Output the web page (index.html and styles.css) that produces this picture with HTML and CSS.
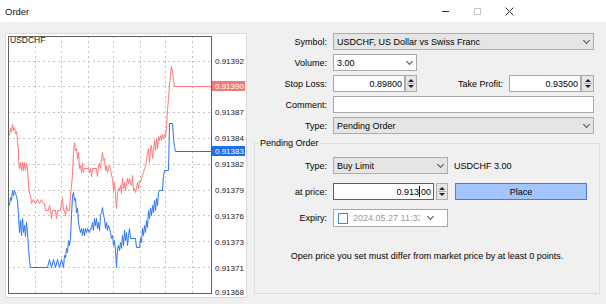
FILE: index.html
```html
<!DOCTYPE html>
<html lang="en">
<head>
  <meta charset="UTF-8">
  <title>Order</title>
  <link rel="stylesheet" href="styles.css">
</head>
<body>

  <div class="titlebar">
    <span class="title">Order</span>
    <div class="caption">
      <span class="cap-btn"><i class="min"></i></span>
      <span class="cap-btn"><i class="max"></i></span>
      <span class="cap-btn">
        <svg width="9" height="9" viewBox="0 0 9 9"><path d="M0.5 0.5 L8.5 8.5 M8.5 0.5 L0.5 8.5" stroke="#333" stroke-width="1"/></svg>
      </span>
    </div>
  </div>

  <div class="content">
    <!-- tick chart -->
    <div class="chart">
      <svg width="242" height="265" viewBox="5 33 242 265">
        <rect x="5.5" y="33.5" width="241" height="264" fill="#fff" stroke="#dadada"/>
        <g class="grid">
          <path d="M8 61.5H211 M8 86.5H211 M8 112.5H211 M8 138.5H211 M8 164.5H211 M8 190.5H211 M8 215.5H211 M8 241.5H211 M8 267.5H211"/>
          <path d="M35.5 36V294 M61.5 36V294 M88.5 36V294 M113.5 36V294 M140.5 36V294 M165.5 36V294 M192.5 36V294"/>
        </g>
        <g transform="translate(0.5 0.5)">
          <polyline class="ask" points="9,135 10,128 11,131 12,124 13,130 14,127 15,133 16,131 17,140 18,152 18,160 19,168 20,162 21,170 22,162 23,170 24,162 25,170 26,163 27,168 28,185 29,193 30,195 31,203 33,199 35,203 37,199 39,203 41,199 43,203 44,203 45,210 48,210 49,205 50,210 51,218 52,210 55,210 56,218 57,210 60,210 61,202 62,198 63,210 64,210 65,215 66,205 67,210 69,210 70,195 72,175 73,150 74,142 75,150 76,148 77,158 78,152 79,168 80,165 81,172 82,163 83,172 84,168 88,168 89,172 90,168 91,176 92,168 96,168 97,176 98,165 99,163 100,168 101,158 102,152 103,160 104,158 105,170 106,165 107,172 108,168 109,165 110,168 111,175 112,178 113,190 114,182 115,195 116,208 117,193 118,188 119,190 120,185 121,193 122,178 123,188 124,182 125,190 126,183 127,178 128,183 129,178 130,183 131,185 132,175 133,190 134,188 135,192 136,188 137,182 138,188 139,180 140,182 141,178 142,175 143,172 144,168 145,166 146,160 147,152 148,148 149,162 150,148 151,145 152,158 153,150 154,140 155,150 156,138 157,148 158,136 159,140 160,135 161,140 162,134 163,138 164,134 165,136 166,128 167,110 168,98 169,84 170,75 171,66 172,72 173,80 174,86 211,86"/>
          <polyline class="bid" points="9,205 10,197 11,200 12,190 13,195 14,190 15,193 16,196 17,200 18,215 19,232 20,220 21,235 22,218 23,232 24,225 25,236 26,222 27,232 28,248 29,260 30,267 47,267 49,259 51,267 53,259 55,267 57,259 59,267 61,259 63,267 64,255 65,257 66,248 67,252 68,240 69,245 70,238 71,215 72,195 73,192 74,200 75,198 76,212 77,208 78,222 79,228 80,232 81,228 82,235 83,228 84,235 85,228 86,232 87,228 89,232 90,228 91,228 92,222 93,230 94,218 95,225 96,218 97,228 98,222 99,230 100,215 101,212 102,207 103,215 104,218 105,228 106,222 107,230 108,225 109,228 110,232 111,238 112,235 113,245 114,240 115,250 116,267 117,248 118,245 119,250 120,242 121,248 122,235 123,245 124,230 125,240 126,232 127,245 128,235 129,228 130,238 135,238 136,247 139,247 140,238 141,242 142,228 143,235 144,225 145,232 146,220 147,227 148,210 149,218 150,208 151,215 152,205 153,212 154,200 155,210 156,198 157,205 158,192 159,190 162,190 163,175 164,170 168,170 169,123 172,123 173,138 174,146 175,151 211,151"/>
        </g>
        <rect x="8.5" y="36.5" width="203" height="257" fill="none" stroke="#606060"/>
        <text class="sym" x="10" y="43">USDCHF</text>
        <g class="axis">
          <text x="215" y="64">0.91392</text>
          <text x="215" y="115">0.91387</text>
          <text x="215" y="141">0.91384</text>
          <text x="215" y="167">0.91382</text>
          <text x="215" y="193">0.91379</text>
          <text x="215" y="219">0.91376</text>
          <text x="215" y="245">0.91373</text>
          <text x="215" y="271">0.91371</text>
          <text x="215" y="295">0.91368</text>
        </g>
        <rect x="212" y="81" width="33" height="10" fill="#f47a7a"/>
        <text class="tag" x="215" y="89">0.91390</text>
        <rect x="212" y="146" width="33" height="10" fill="#1f6ff0"/>
        <text class="tag" x="215" y="154">0.91383</text>
      </svg>
    </div>

    <!-- order form -->
    <div class="panel">
      <div class="row">
        <label>Symbol:</label>
        <div class="combo list w-full"><span>USDCHF, US Dollar vs Swiss Franc</span><i class="chev"></i></div>
      </div>
      <div class="row">
        <label>Volume:</label>
        <div class="combo edit w-vol"><span>3.00</span><i class="chev"></i></div>
      </div>
      <div class="row">
        <label>Stop Loss:</label>
        <div class="edit num w-sl">0.89800</div>
        <div class="spin"><i class="up"></i><i class="down"></i></div>
        <label class="tp-label">Take Profit:</label>
        <div class="edit num w-tp">0.93500</div>
        <div class="spin spin-tp"><i class="up"></i><i class="down"></i></div>
      </div>
      <div class="row">
        <label>Comment:</label>
        <div class="edit w-full"></div>
      </div>
      <div class="row">
        <label>Type:</label>
        <div class="combo list w-full"><span>Pending Order</span><i class="chev"></i></div>
      </div>

      <fieldset class="group">
        <legend>Pending Order</legend>
        <div class="row first">
          <label>Type:</label>
          <div class="combo list w-mid"><span>Buy Limit</span><i class="chev"></i></div>
          <span class="info">USDCHF 3.00</span>
        </div>
        <div class="row">
          <label>at price:</label>
          <div class="edit num focus w-price">0.913<i class="caret"></i>00</div>
          <div class="spin spin-price"><i class="up"></i><i class="down"></i></div>
          <button class="place">Place</button>
        </div>
        <div class="row expiry-row">
          <label>Expiry:</label>
          <div class="combo edit w-mid expiry">
            <i class="check"></i><span class="date">2024.05.27 11:33</span><i class="chev"></i>
          </div>
        </div>
        <p class="note">Open price you set must differ from market price by at least 0 points.</p>
      </fieldset>
    </div>
  </div>

</body>
</html>
```

FILE: styles.css
```css
* {
  box-sizing: border-box;
}
body {
  margin: 0;
  width: 606px;
  height: 304px;
  overflow: hidden;
  background-color: #f0f0f0;
  font-family: "Liberation Sans", Arial, sans-serif;
  font-size: 9px;
  color: #000;
}

/* window caption */
.titlebar {
  height: 22px;
  background: #fff;
  display: flex;
  align-items: center;
  padding-left: 5px;
}
.title {
  font-size: 9.5px;
  color: #111;
}
.caption {
  margin-left: auto;
  display: flex;
  padding-right: 81px;
}
.cap-btn {
  width: 32px;
  height: 22px;
  display: flex;
  align-items: center;
  justify-content: center;
}
.cap-btn .min {
  width: 7px;
  height: 1px;
  background: #333;
}
.cap-btn .max {
  width: 7px;
  height: 7px;
  border: 1px solid #c8c8c8;
}

.content {
  display: flex;
  padding: 11px 0 0 5px;
}

/* chart */
.chart {
  width: 242px;
  height: 265px;
}
.chart svg {
  display: block;
}
.grid path {
  stroke: #c4c4c4;
  stroke-width: 1;
  stroke-dasharray: 2 3;
  fill: none;
}
.ask,
.bid {
  fill: none;
  stroke-width: 1;
  stroke-linejoin: miter;
}
.ask {
  stroke: #ff7676;
}
.bid {
  stroke: #2a72f5;
}
.chart text {
  font-family: "Liberation Sans", Arial, sans-serif;
  font-size: 8px;
  fill: #1a1a1a;
}
.chart text.sym {
  font-size: 8.5px;
}
.chart text.tag {
  fill: #fff;
}

/* form */
.panel {
  width: 346px;
  margin-left: 7px;
}
.row {
  display: flex;
  align-items: center;
  height: 17px;
  margin-bottom: 4px;
}
.row label {
  width: 73px;
  margin-right: 6px;
  text-align: right;
  flex-shrink: 0;
}
.row .tp-label {
  width: 86px;
}
.edit,
.combo {
  height: 17px;
  border: 1px solid #a8a8a8;
  background: #fff;
  display: flex;
  align-items: center;
  padding: 0 3px;
  white-space: nowrap;
  overflow: hidden;
}
.combo {
  justify-content: space-between;
}
.combo.list {
  background: #e5e5e5;
  border-color: #adadad;
}
.num {
  justify-content: flex-end;
  padding-right: 2px;
}
.focus {
  border-color: #0078d7;
}
.caret {
  width: 1px;
  height: 11px;
  background: #000;
  margin: 0 0.5px;
}
.chev {
  width: 5px;
  height: 5px;
  border-right: 1px solid #505050;
  border-bottom: 1px solid #505050;
  transform: rotate(45deg);
  margin: 0 1px 3px 0;
  flex-shrink: 0;
}

.w-full {
  width: 261px;
}
.w-vol {
  width: 84px;
}
.w-sl {
  width: 72px;
}
.w-tp {
  width: 72px;
}
.w-mid {
  width: 115px;
}
.w-price {
  width: 101px;
}

/* up/down buttons */
.spin {
  width: 12px;
  height: 17px;
  border: 1px solid #adadad;
  background: #e5e5e5;
  display: flex;
  flex-direction: column;
  align-items: center;
  justify-content: space-around;
  padding: 2px 0;
  background-image: linear-gradient(#adadad, #adadad);
  background-size: 8px 1px;
  background-position: center;
  background-repeat: no-repeat;
}
.spin-tp {
  width: 13px;
}
.spin-price {
  margin-left: 2px;
}
.spin .up {
  border-left: 3px solid transparent;
  border-right: 3px solid transparent;
  border-bottom: 3px solid #222;
}
.spin .down {
  border-left: 3px solid transparent;
  border-right: 3px solid transparent;
  border-top: 3px solid #222;
}

/* pending order group */
.group {
  margin: 3px 0 0;
  padding: 0;
  width: 346px;
  height: 156px;
  border: 1px solid #dcdcdc;
  min-width: 0;
}
.group legend {
  margin-left: 4px;
  padding: 0 1px;
  line-height: 10px;
  font-size: 9px;
}
.group .row {
  margin-bottom: 9px;
}
.group .row label {
  width: 72px;
}
.group .row.first {
  margin-top: 9px;
}
.info {
  margin-left: 6px;
}
.place {
  margin-left: 7px;
  width: 132px;
  height: 17px;
  padding: 0;
  border: 1px solid #3d7fdc;
  background: #a3c4fc;
  font-family: inherit;
  font-size: 9px;
  color: #000;
}
.expiry-row {
  height: 18px;
}
.expiry {
  height: 18px;
  justify-content: flex-start;
}
.check {
  width: 10px;
  height: 11px;
  border: 1px solid #3c8ce6;
  background: #fff;
  margin: 0 5px 0 1px;
  flex-shrink: 0;
}
.date {
  width: 67px;
  overflow: hidden;
  color: #9a9a9a;
}
.expiry .chev {
  margin-left: 8px;
}
.note {
  margin: 23px 0 0;
  line-height: 12px;
  text-align: center;
}
```
